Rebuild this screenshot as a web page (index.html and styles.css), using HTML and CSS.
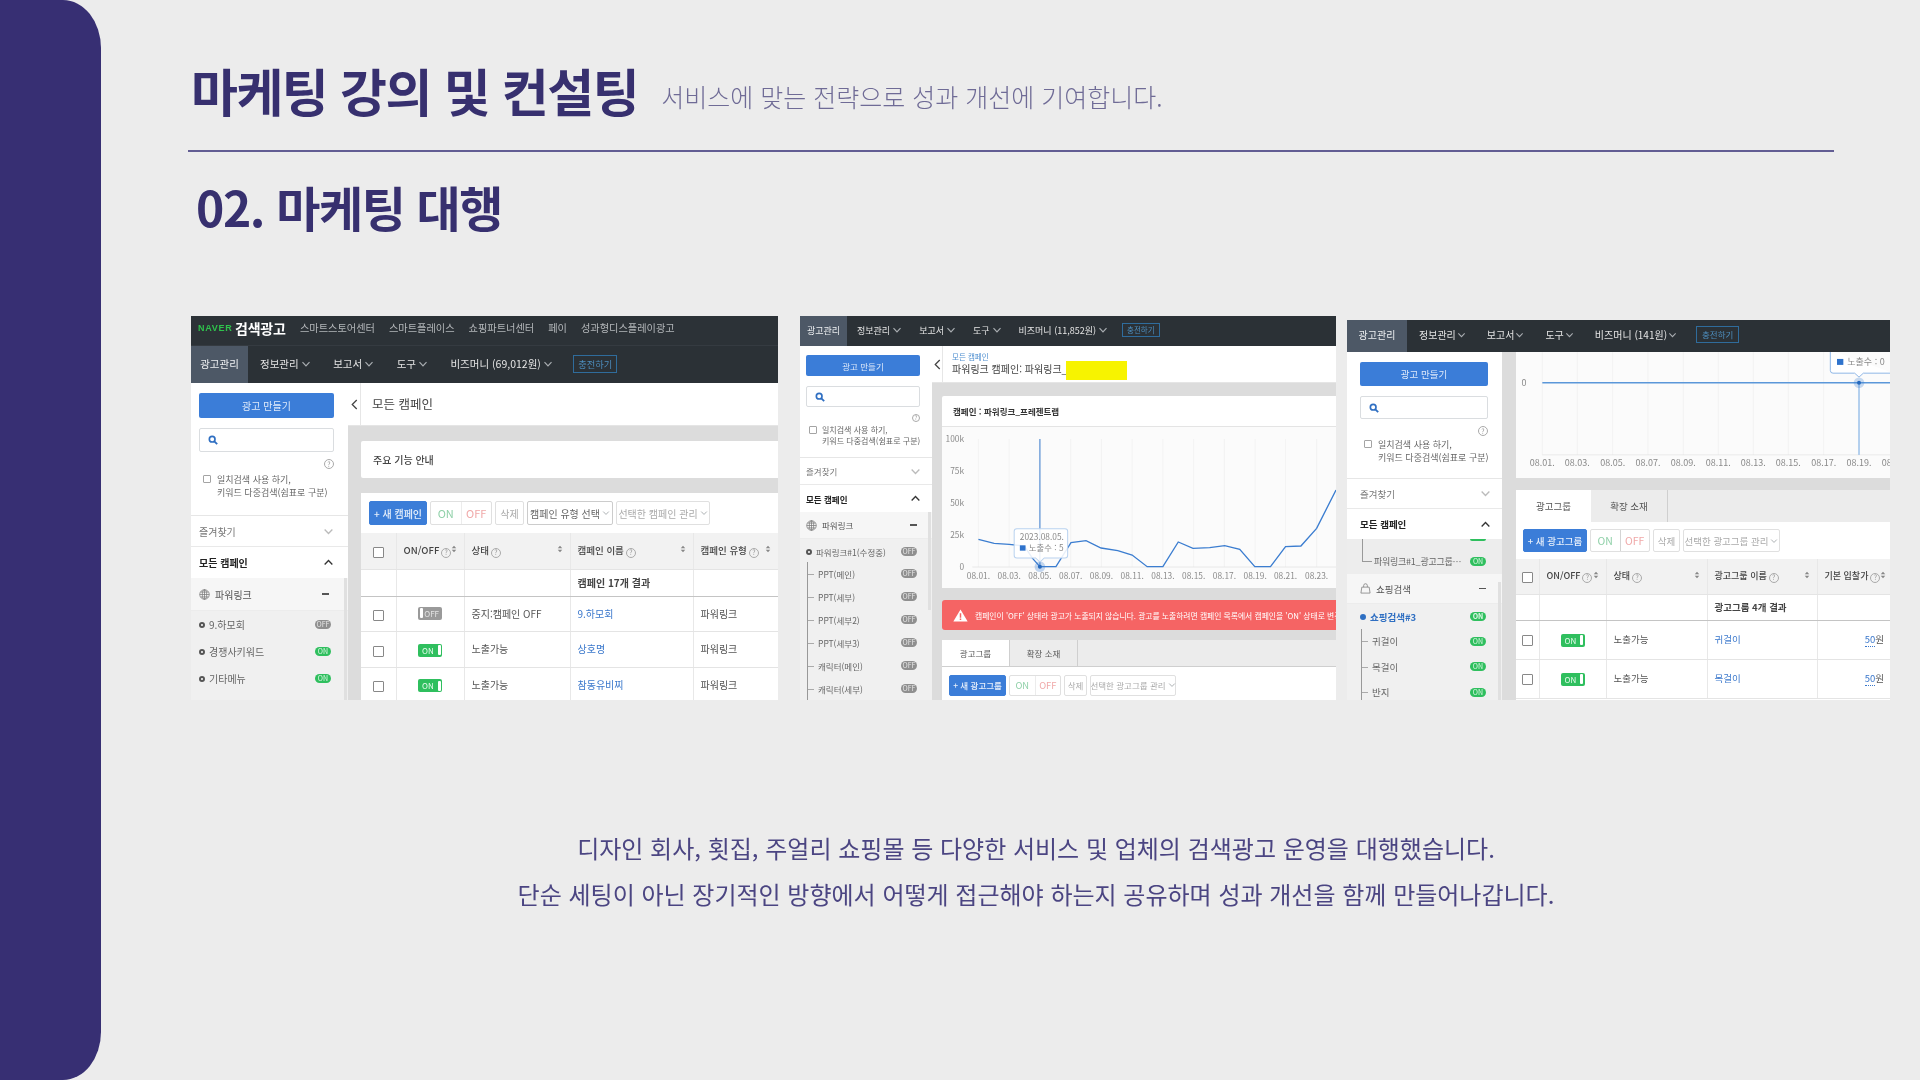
FILE: index.html
```html
<!DOCTYPE html>
<html lang="ko">
<head>
<meta charset="utf-8">
<title>마케팅 강의 및 컨설팅</title>
<link rel="stylesheet" href="styles.css">
</head>
<body>
<svg class="sprite" aria-hidden="true">
  <symbol id="i-search" viewBox="0 0 12 12"><circle cx="5" cy="5" r="3.4" fill="none" stroke="currentColor" stroke-width="2"/><path d="M7.6 7.6 11 11" stroke="currentColor" stroke-width="2.2"/></symbol>
  <symbol id="i-down" viewBox="0 0 10 10"><path d="M1.5 3.2 5 6.8 8.5 3.2" fill="none" stroke="currentColor" stroke-width="1.2"/></symbol>
  <symbol id="i-up" viewBox="0 0 10 10"><path d="M1.5 6.8 5 3.2 8.5 6.8" fill="none" stroke="currentColor" stroke-width="1.2"/></symbol>
  <symbol id="i-left" viewBox="0 0 10 14"><path d="M7.5 2 2.5 7l5 5" fill="none" stroke="currentColor" stroke-width="1.4"/></symbol>
  <symbol id="i-sort" viewBox="0 0 8 10"><path d="M4 .8 7 4H1zM4 9.2 1 6h6z" fill="currentColor"/></symbol>
  <symbol id="i-globe" viewBox="0 0 12 12"><g fill="none" stroke="currentColor" stroke-width=".8"><circle cx="6" cy="6" r="5.2"/><ellipse cx="6" cy="6" rx="2.4" ry="5.2"/><path d="M.8 6h10.400M1.600 3.400h8.800M1.600 8.600h8.800M6 .8v10.400"/></g></symbol>
  <symbol id="i-bag" viewBox="0 0 12 12"><path d="M1 11 2 4.500h8L11 11zM4 4.500V2.800a2 2 0 0 1 4 0v1.700" fill="none" stroke="currentColor" stroke-width=".8"/></symbol>
  <symbol id="i-warn" viewBox="0 0 16 14"><path d="M8 .5 15.700 13.500H.3z" fill="#fff"/><path d="M7.200 4.500h1.600v5H7.200zM7.200 10.300h1.600v1.600H7.200z" fill="#f56464"/></symbol>
</svg>

<div class="page">
  <aside class="rail"></aside>
  <main class="main">
    <header class="head">
      <h1 class="title">마케팅 강의 및 컨설팅</h1>
      <p class="subtitle">서비스에 맞는 전략으로 성과 개선에 기여합니다.</p>
    </header>
    <hr class="rule">
    <h2 class="section">02. 마케팅 대행</h2>

    <section class="shots">
      <!-- 첫 번째 화면 -->
      <article class="shot shot-a">
        <div class="brandbar">
          <span class="naver">NAVER</span><span class="brand">검색광고</span>
          <span class="blink">스마트스토어센터</span><span class="blink">스마트플레이스</span><span class="blink">쇼핑파트너센터</span><span class="blink">페이</span><span class="blink">성과형디스플레이광고</span>
        </div>
        <nav class="nav">
          <span class="nav-on">광고관리</span>
          <span class="nav-i">정보관리<svg class="ic-down"><use href="#i-down"/></svg></span>
          <span class="nav-i">보고서<svg class="ic-down"><use href="#i-down"/></svg></span>
          <span class="nav-i">도구<svg class="ic-down"><use href="#i-down"/></svg></span>
          <span class="nav-i">비즈머니 (69,012원)<svg class="ic-down"><use href="#i-down"/></svg></span>
          <span class="charge">충전하기</span>
        </nav>
        <div class="body">
          <div class="side">
            <div class="side-top">
              <div class="make">광고 만들기</div>
              <div class="search"><svg class="ic-search"><use href="#i-search"/></svg></div>
              <div class="help-row"><span class="help">?</span></div>
              <div class="check-row"><span class="box"></span><span>일치검색 사용 하기,<br>키워드 다중검색(쉼표로 구분)</span></div>
            </div>
            <div class="side-row">즐겨찾기<svg class="ic-chev"><use href="#i-down"/></svg></div>
            <div class="side-row strong">모든 캠페인<svg class="ic-chev dark"><use href="#i-up"/></svg></div>
            <div class="tree">
              <div class="tree-head"><svg class="ic-type"><use href="#i-globe"/></svg><span class="grow">파워링크</span><span class="minus"></span></div>
              <div class="list">
                <div class="item"><span class="dot"></span><span class="grow">9.하모회</span><span class="pill off">OFF</span></div>
                <div class="item"><span class="dot"></span><span class="grow">경쟁사키워드</span><span class="pill">ON</span></div>
                <div class="item"><span class="dot"></span><span class="grow">기타메뉴</span><span class="pill">ON</span></div>
              </div>
              <span class="thumb"></span>
            </div>
          </div>
          <div class="pane">
            <div class="pane-head">
              <span class="back"><svg class="ic-left"><use href="#i-left"/></svg></span>
              <div class="crumb"><strong>모든 캠페인</strong></div>
            </div>
            <div class="pane-body">
              <div class="card notice">주요 기능 안내</div>
              <div class="card grid-card">
                <div class="tools">
                  <span class="btn new">+ 새 캠페인</span>
                  <span class="btn group"><i class="on-t">ON</i><i class="off-t">OFF</i></span>
                  <span class="btn del">삭제</span>
                  <span class="btn sel">캠페인 유형 선택<svg class="ic-down"><use href="#i-down"/></svg></span>
                  <span class="btn mgr">선택한 캠페인 관리<svg class="ic-down"><use href="#i-down"/></svg></span>
                </div>
                <table class="tbl">
                  <colgroup><col class="c1"><col class="c2"><col class="c3"><col class="c4"><col class="c5"></colgroup>
                  <thead><tr>
                    <th><span class="box big"></span></th>
                    <th><div class="th"><span>ON/OFF<span class="help">?</span></span><svg class="ic-sort"><use href="#i-sort"/></svg></div></th>
                    <th><div class="th"><span>상태<span class="help">?</span></span><svg class="ic-sort"><use href="#i-sort"/></svg></div></th>
                    <th><div class="th"><span>캠페인 이름<span class="help">?</span></span><svg class="ic-sort"><use href="#i-sort"/></svg></div></th>
                    <th><div class="th"><span>캠페인 유형<span class="help">?</span></span><svg class="ic-sort"><use href="#i-sort"/></svg></div></th>
                  </tr></thead>
                  <tbody>
                    <tr class="sum"><td></td><td></td><td></td><td><b>캠페인 17개 결과</b></td><td></td></tr>
                    <tr><td><span class="box big"></span></td><td class="mid"><span class="switch off"><i></i>OFF</span></td><td>중지:캠페인 OFF</td><td><a class="lnk">9.하모회</a></td><td>파워링크</td></tr>
                    <tr><td><span class="box big"></span></td><td class="mid"><span class="switch">ON<i></i></span></td><td>노출가능</td><td><a class="lnk">상호명</a></td><td>파워링크</td></tr>
                    <tr><td><span class="box big"></span></td><td class="mid"><span class="switch">ON<i></i></span></td><td>노출가능</td><td><a class="lnk">참동유비찌</a></td><td>파워링크</td></tr>
                  </tbody>
                </table>
              </div>
            </div>
          </div>
        </div>
      </article>

      <!-- 두 번째 화면 -->
      <article class="shot shot-b">
        <nav class="nav">
          <span class="nav-on">광고관리</span>
          <span class="nav-i">정보관리<svg class="ic-down"><use href="#i-down"/></svg></span>
          <span class="nav-i">보고서<svg class="ic-down"><use href="#i-down"/></svg></span>
          <span class="nav-i">도구<svg class="ic-down"><use href="#i-down"/></svg></span>
          <span class="nav-i">비즈머니 (11,852원)<svg class="ic-down"><use href="#i-down"/></svg></span>
          <span class="charge">충전하기</span>
        </nav>
        <div class="body">
          <div class="side">
            <div class="side-top">
              <div class="make">광고 만들기</div>
              <div class="search"><svg class="ic-search"><use href="#i-search"/></svg></div>
              <div class="help-row"><span class="help">?</span></div>
              <div class="check-row"><span class="box"></span><span>일치검색 사용 하기,<br>키워드 다중검색(쉼표로 구분)</span></div>
            </div>
            <div class="side-row">즐겨찾기<svg class="ic-chev"><use href="#i-down"/></svg></div>
            <div class="side-row strong">모든 캠페인<svg class="ic-chev dark"><use href="#i-up"/></svg></div>
            <div class="tree">
              <div class="tree-head"><svg class="ic-type"><use href="#i-globe"/></svg><span class="grow">파워링크</span><span class="minus"></span></div>
              <div class="list">
                <div class="item"><span class="dot"></span><span class="grow">파워링크#1(수정중)</span><span class="pill off">OFF</span></div>
                <div class="sub">
                  <div class="item"><span class="grow">PPT(메인)</span><span class="pill off">OFF</span></div>
                  <div class="item"><span class="grow">PPT(세부)</span><span class="pill off">OFF</span></div>
                  <div class="item"><span class="grow">PPT(세부2)</span><span class="pill off">OFF</span></div>
                  <div class="item"><span class="grow">PPT(세부3)</span><span class="pill off">OFF</span></div>
                  <div class="item"><span class="grow">캐릭터(메인)</span><span class="pill off">OFF</span></div>
                  <div class="item"><span class="grow">캐릭터(세부)</span><span class="pill off">OFF</span></div>
                </div>
              </div>
              <span class="thumb"></span>
            </div>
          </div>
          <div class="pane">
            <div class="pane-head">
              <span class="back"><svg class="ic-left"><use href="#i-left"/></svg></span>
              <div class="crumb"><small>모든 캠페인</small><strong>파워링크 캠페인: 파워링크_<mark class="hide"></mark></strong></div>
            </div>
            <div class="pane-body">
              <div class="card chart-card">
                <div class="chart-title">캠페인 : 파워링크_프레젠트랩</div>
                <svg class="chart" viewBox="39 351 1179 483" preserveAspectRatio="none">
                  <rect x="39" y="351" width="1179" height="483" fill="#fbfbfb"/>
                  <g stroke="#efefef" stroke-width="2">
                    <path d="M148 387V771M240 387V771M332 387V771M424 387V771M516 387V771M608 387V771M700 387V771M792 387V771M884 387V771M976 387V771M1067 387V771M1160 387V771"/>
                  </g>
                  <path d="M130 771H1218" stroke="#dfdfdf" stroke-width="2"/>
                  <g class="axis">
                    <text x="105" y="396" text-anchor="end">100k</text><text x="105" y="492" text-anchor="end">75k</text><text x="105" y="589" text-anchor="end">50k</text><text x="105" y="683" text-anchor="end">25k</text><text x="105" y="780" text-anchor="end">0</text>
                    <g text-anchor="middle">
                      <text x="148" y="806">08.01.</text><text x="240" y="806">08.03.</text><text x="332" y="806">08.05.</text><text x="424" y="806">08.07.</text><text x="516" y="806">08.09.</text><text x="608" y="806">08.11.</text><text x="700" y="806">08.13.</text><text x="792" y="806">08.15.</text><text x="884" y="806">08.17.</text><text x="976" y="806">08.19.</text><text x="1067" y="806">08.21.</text><text x="1160" y="806">08.23.</text>
                    </g>
                  </g>
                  <path d="M148 688 195 700 240 703 285 708 310 745 332 770 380 770 425 698 470 692 515 714 565 722 608 735 653 770 700 770 746 696 790 715 840 713 885 707 930 718 975 770 1022 770 1067 710 1113 708 1160 655 1218 540" fill="none" stroke="#3b7dd0" stroke-width="4"/>
                  <path d="M332 387V770" stroke="#3b7dd0" stroke-width="3"/>
                  <circle cx="332" cy="770" r="16" fill="#3b7dd0" opacity=".3"/><circle cx="332" cy="770" r="6" fill="#2468bd"/>
                  <path d="M263 656H407a8 8 0 0 1 8 8V736a8 8 0 0 1-8 8H345L332 756 319 744H263a8 8 0 0 1-8-8V664a8 8 0 0 1 8-8z" fill="#fff" fill-opacity=".88" stroke="#b9d2ef" stroke-width="3"/>
                  <g class="axis"><text x="272" y="690">2023.08.05.</text><text x="299" y="722">노출수 : 5</text></g>
                  <rect x="272" y="706" width="17" height="16" fill="#2f73cc"/>
                </svg>
              </div>
              <div class="alert"><svg class="ic-warn"><use href="#i-warn"/></svg>캠페인이 'OFF' 상태라 광고가 노출되지 않습니다. 광고를 노출하려면 캠페인 목록에서 캠페인을 'ON' 상태로 변경하세요.</div>
              <div class="tabs"><span class="tab on">광고그룹</span><span class="tab">확장 소재</span></div>
              <div class="card grid-card">
                <div class="tools">
                  <span class="btn new">+ 새 광고그룹</span>
                  <span class="btn group"><i class="on-t">ON</i><i class="off-t">OFF</i></span>
                  <span class="btn del">삭제</span>
                  <span class="btn mgr">선택한 광고그룹 관리<svg class="ic-down"><use href="#i-down"/></svg></span>
                </div>
              </div>
            </div>
          </div>
        </div>
      </article>

      <!-- 세 번째 화면 -->
      <article class="shot shot-c">
        <nav class="nav">
          <span class="nav-on">광고관리</span>
          <span class="nav-i">정보관리<svg class="ic-down"><use href="#i-down"/></svg></span>
          <span class="nav-i">보고서<svg class="ic-down"><use href="#i-down"/></svg></span>
          <span class="nav-i">도구<svg class="ic-down"><use href="#i-down"/></svg></span>
          <span class="nav-i">비즈머니 (141원)<svg class="ic-down"><use href="#i-down"/></svg></span>
          <span class="charge">충전하기</span>
        </nav>
        <div class="body">
          <div class="side">
            <div class="side-top">
              <div class="make">광고 만들기</div>
              <div class="search"><svg class="ic-search"><use href="#i-search"/></svg></div>
              <div class="help-row"><span class="help">?</span></div>
              <div class="check-row"><span class="box"></span><span>일치검색 사용 하기,<br>키워드 다중검색(쉼표로 구분)</span></div>
            </div>
            <div class="side-row">즐겨찾기<svg class="ic-chev"><use href="#i-down"/></svg></div>
            <div class="side-row strong">모든 캠페인<svg class="ic-chev dark"><use href="#i-up"/></svg></div>
            <div class="tree">
              <div class="tree-prev"><span class="grow">파워링크#1_광고그룹⋯</span><span class="pill">ON</span></div>
              <div class="tree-head"><svg class="ic-type"><use href="#i-bag"/></svg><span class="grow">쇼핑검색</span><span class="minus"></span></div>
              <div class="list">
                <div class="item active"><span class="dot"></span><span class="grow">쇼핑검색#3</span><span class="pill">ON</span></div>
                <div class="sub">
                  <div class="item"><span class="grow">귀걸이</span><span class="pill">ON</span></div>
                  <div class="item"><span class="grow">목걸이</span><span class="pill">ON</span></div>
                  <div class="item"><span class="grow">반지</span><span class="pill">ON</span></div>
                </div>
              </div>
              <span class="thumb"></span>
            </div>
          </div>
          <div class="pane">
            <div class="pane-body">
              <div class="card chart-card">
                <svg class="chart" viewBox="48 126 1122 381" preserveAspectRatio="none">
                  <rect x="48" y="126" width="1122" height="381" fill="#fbfbfb"/>
                  <path d="M127 126V437M232 126V437M338 126V437M444 126V437M550 126V437M655 126V437M760 126V437M865 126V437M971 126V437" stroke="#efefef" stroke-width="2"/>
                  <path d="M127 437H1170" stroke="#e2e2e2" stroke-width="2"/>
                  <g class="axis"><text x="72" y="229" text-anchor="middle">0</text>
                    <g text-anchor="middle"><text x="127" y="472">08.01.</text><text x="232" y="472">08.03.</text><text x="338" y="472">08.05.</text><text x="444" y="472">08.07.</text><text x="550" y="472">08.09.</text><text x="655" y="472">08.11.</text><text x="760" y="472">08.13.</text><text x="865" y="472">08.15.</text><text x="971" y="472">08.17.</text><text x="1077" y="472">08.19.</text><text x="1183" y="472">08.21.</text></g>
                  </g>
                  <path d="M127 219H1170" stroke="#5b97d9" stroke-width="5"/>
                  <path d="M1077 219V437" stroke="#6ba3e0" stroke-width="3"/>
                  <circle cx="1077" cy="219" r="16" fill="#3b7dd0" opacity=".28"/><circle cx="1077" cy="219" r="6" fill="#2468bd"/>
                  <path d="M991 120V182a8 8 0 0 0 8 8H1064L1077 202 1090 190H1180" fill="#fff" stroke="#8fb6e6" stroke-width="3"/>
                  <rect x="1011" y="147" width="19" height="18" fill="#2f73cc"/>
                  <g class="axis"><text x="1042" y="166">노출수 : 0</text></g>
                </svg>
              </div>
              <div class="tabs"><span class="tab on">광고그룹</span><span class="tab">확장 소재</span></div>
              <div class="card grid-card">
                <div class="tools">
                  <span class="btn new">+ 새 광고그룹</span>
                  <span class="btn group"><i class="on-t">ON</i><i class="off-t">OFF</i></span>
                  <span class="btn del">삭제</span>
                  <span class="btn mgr">선택한 광고그룹 관리<svg class="ic-down"><use href="#i-down"/></svg></span>
                </div>
                <table class="tbl">
                  <colgroup><col class="c1"><col class="c2"><col class="c3"><col class="c4"><col class="c5"></colgroup>
                  <thead><tr>
                    <th><span class="box big"></span></th>
                    <th><div class="th"><span>ON/OFF<span class="help">?</span></span><svg class="ic-sort"><use href="#i-sort"/></svg></div></th>
                    <th><div class="th"><span>상태<span class="help">?</span></span><svg class="ic-sort"><use href="#i-sort"/></svg></div></th>
                    <th><div class="th"><span>광고그룹 이름<span class="help">?</span></span><svg class="ic-sort"><use href="#i-sort"/></svg></div></th>
                    <th><div class="th"><span>기본 입찰가<span class="help">?</span></span><svg class="ic-sort"><use href="#i-sort"/></svg></div></th>
                  </tr></thead>
                  <tbody>
                    <tr class="sum"><td></td><td></td><td></td><td><b>광고그룹 4개 결과</b></td><td></td></tr>
                    <tr><td><span class="box big"></span></td><td class="mid"><span class="switch">ON<i></i></span></td><td>노출가능</td><td><a class="lnk">귀걸이</a></td><td class="num"><a class="bid">50</a>원</td></tr>
                    <tr><td><span class="box big"></span></td><td class="mid"><span class="switch">ON<i></i></span></td><td>노출가능</td><td><a class="lnk">목걸이</a></td><td class="num"><a class="bid">50</a>원</td></tr>
                  </tbody>
                </table>
              </div>
            </div>
          </div>
        </div>
      </article>
    </section>

    <section class="desc">
      <p>디자인 회사, 횟집, 주얼리 쇼핑몰 등 다양한 서비스 및 업체의 검색광고 운영을 대행했습니다.</p>
      <p>단순 세팅이 아닌 장기적인 방향에서 어떻게 접근해야 하는지 공유하며 성과 개선을 함께 만들어나갑니다.</p>
    </section>
  </main>
</div>
</body>
</html>
```

FILE: styles.css
```css
* { box-sizing: border-box; }
html, body { margin: 0; height: 100%; }
body {
  font-family: "Noto Sans CJK KR", "Noto Sans", sans-serif;
  background: #ececec;
  overflow: hidden;
}
.sprite { display: none; }
.page { display: flex; width: 1920px; height: 1080px; }
.rail {
  flex: 0 0 101px;
  background: #372f73;
  border-radius: 0 38px 38px 0 / 0 48px 48px 0;
}
.main { flex: 1; padding: 0 30px 0 87px; display: flex; flex-direction: column; min-width: 0; }

/* 제목 영역 */
.head { height: 150px; padding: 54px 0 0 3px; display: flex; align-items: flex-start; column-gap: 23px; }
.title { margin: 0; font-size: 51px; line-height: 72px; font-weight: 700; color: #37306f; letter-spacing: -1.5px; filter: blur(.3px); }
.subtitle { margin: 6px 0 0; font-size: 25px; line-height: 72px; font-weight: 300; color: #6f6b96; filter: blur(.3px); }
.rule { margin: 0 56px 0 0; border: 0; height: 2px; background: #625d93; }
.section { margin: 21px 0 0 8px; font-size: 48px; line-height: 66px; font-weight: 700; letter-spacing: -1.4px; color: #37306f; filter: blur(.3px); }

/* 스크린샷 묶음 */
.shots { display: flex; align-items: flex-end; height: 384px; margin: 77px 0 0 3px; }
.shot {
  --fs: 10px; --nav-fs: 10.500px; --side-w: 157px; --side-pad: 8px; --strip: 13px; --chev-r: 14px; --head-r: 16px; --list-r: 17px;
  --btn-h: 25px; --search-h: 24px; --top-h: 133px; --row-h: 31px; --hdr-h: 33px; --item-h: 27px;
  display: flex; flex-direction: column; overflow: hidden; flex: none;
  background: #fff; color: #444; font-size: var(--fs); filter: blur(.35px);
}
.shot-a { width: 587px; height: 384px; margin-right: 22px; }
.shot-b {
  width: 536px; height: 384px; margin-right: 11px;
  --fs: 8.500px; --nav-fs: 9px; --side-w: 132px; --side-pad: 6px; --strip: 11px; --chev-r: 11px; --head-r: 12px; --list-r: 15px;
  --btn-h: 21px; --search-h: 21px; --top-h: 112px; --row-h: 27px; --hdr-h: 27px; --item-h: 23px;
}
.shot-c {
  width: 543px; height: 380px;
  --fs: 9.500px; --nav-fs: 10px; --side-w: 155px; --side-pad: 13px; --strip: 14px; --chev-r: 11px; --head-r: 13px; --list-r: 16px;
  --btn-h: 24px; --search-h: 23px; --top-h: 127px; --row-h: 30px; --hdr-h: 30px; --item-h: 25.500px;
}

.brandbar { height: 30px; flex: none; background: #2c3237; display: flex; align-items: center; padding: 0 0 6px 7px; border-bottom: 1px solid #353b41; }
.naver { color: #2fc24c; font-weight: 700; font-size: 9px; letter-spacing: .7px; width: 37px; font-family: "Liberation Sans", sans-serif; }
.brand { color: #fff; font-size: 14px; font-weight: 700; width: 65px; letter-spacing: -.2px; }
.blink { color: #b4b7ba; font-size: 10.200px; margin-right: 14px; }

.nav { flex: none; display: flex; align-items: center; height: 37px; padding-bottom: 2px; background: #2b3136; color: #e4e4e4; font-size: var(--nav-fs); }
.shot-b .nav { height: 30px; }
.shot-c .nav { height: 32px; padding-bottom: 3px; }
.nav-on { align-self: stretch; margin-bottom: -3px; padding-bottom: 3px; display: flex; align-items: center; justify-content: center; width: 57px; background: #4d5866; margin-right: 12px; color: #eef0f2; }
.nav-i { display: flex; align-items: center; margin-right: 22.500px; white-space: nowrap; }
.ic-down { width: 10px; height: 10px; margin-left: 2px; color: #a9adb1; flex: none; }
.charge { border: 1px solid #2f6c9c; color: #4d8dbd; padding: 0 4px; height: 18px; line-height: 16px; font-size: .88em; margin-left: -2px; white-space: nowrap; }
.shot-b .nav-on { width: 47px; margin-right: 10px; }
.shot-b .nav-i { margin-right: 17px; }
.shot-b .charge { height: 14px; line-height: 12px; padding: 0 4px; font-size: 7.500px; margin-left: -3px; }
.shot-c .nav-on { width: 60px; margin-right: 12px; }
.shot-c .nav-i { margin-right: 21px; }
.shot-c .nav-i .ic-down { margin-left: 1px; width: 9px; }
.shot-c .charge { height: 17px; line-height: 15px; padding: 0 5px; font-size: 8.500px; margin-left: -2px; }

.body { flex: 1; min-height: 0; display: flex; }

/* 왼쪽 메뉴 */
.side { flex: 0 0 var(--side-w); display: flex; flex-direction: column; background: #fff; color: #555; overflow: hidden; }
.side-top { flex: none; height: var(--top-h); padding: 10px 14px 0 var(--side-pad); border-bottom: 1px solid #e6e6e6; }
.shot-b .side-top { padding: 9px 12px 0 6px; }
.make { height: var(--btn-h); background: #3b7dd8; color: #dfeafa; border-radius: 2px; display: flex; align-items: center; justify-content: center; }
.search { height: var(--search-h); margin-top: 10px; border: 1px solid #dadde0; border-radius: 2px; display: flex; align-items: center; padding-left: 8px; }
.ic-search { width: 10px; height: 10px; color: #2f6fc2; }
.help-row { display: flex; justify-content: flex-end; height: 14px; margin-top: 7px; }
.help { display: inline-flex; align-items: center; justify-content: center; width: 10px; height: 10px; border: 1px solid #aaa; border-radius: 50%; font-size: 7px; color: #999; margin-left: 2px; line-height: 1; vertical-align: -1px; font-weight: 400; }
.shot-b .help { width: 8px; height: 8px; font-size: 6px; }
.check-row { display: flex; gap: 6px; padding-left: 4px; line-height: 13px; color: #666; font-size: .9em; white-space: nowrap; }
.shot-b .check-row { line-height: 11px; margin-top: -4px; font-size: 8px; padding-left: 3px; gap: 5px; }
.shot-c .check-row { margin-top: -2px; font-size: 9px; }
.box { flex: none; display: inline-block; width: 8px; height: 8px; border: 1px solid #a4a4a4; border-radius: 1px; background: #fff; margin-top: 2px; }
.box.big { width: 11px; height: 11px; border-color: #888; margin: 0; vertical-align: middle; }
.side-row { flex: none; height: var(--row-h); padding: 0 var(--chev-r) 0 var(--side-pad); display: flex; align-items: center; justify-content: space-between; color: #777; border-bottom: 1px solid #e9e9e9; }
.side-row.strong { color: #222; font-weight: 700; border: 0; }
.ic-chev { width: 11px; height: 11px; color: #bbb; }
.ic-chev.dark { color: #333; }
.tree { position: relative; flex: 1; background: #f0f0f0; min-height: 0; }
.tree-head { height: var(--hdr-h); display: flex; align-items: center; gap: 5px; padding: 0 var(--head-r) 0 var(--side-pad); background: #f6f6f6; color: #555; border-bottom: 1px solid #ececec; }
.ic-type { width: 11px; height: 11px; color: #777; flex: none; }
.grow { flex: 1; white-space: nowrap; min-width: 0; }
.minus { width: 7px; height: 1.500px; background: #555; margin-right: 3px; }
.list { padding: 0 var(--list-r) 0 var(--side-pad); }
.shot-b .list { padding-top: 1px; }
.item { height: var(--item-h); display: flex; align-items: center; gap: 4px; color: #666; }
.item.active { color: #2f6fc2; font-weight: 700; }
.dot { flex: none; width: 6px; height: 6px; border-radius: 50%; background: #fff; border: 2px solid #555; }
.active .dot { background: #2f6fc2; border-color: #2f6fc2; }
.pill { flex: none; width: 16px; height: 9px; border-radius: 5px; background: #2fbf5e; color: #dff7e6; font-size: 7px; line-height: 9px; text-align: center; }
.pill.off { background: #8f8f8f; color: #e6e6e6; }
.sub { border-left: 1px solid #999; margin-left: 1px; margin-top: -1px; }
.sub .item { padding-left: 10px; position: relative; }
.sub .item::before { content: ""; position: absolute; left: 0; top: 50%; width: 6px; height: 1px; background: #aaa; }
.thumb { position: absolute; right: 1px; top: 0; bottom: 0; width: 3px; background: #e0e0e0; }
.shot-b .thumb { bottom: 90px; }
.shot-c .thumb { top: 43px; }
.tree-prev { height: 35px; display: flex; align-items: center; padding: 10px 16px 0 27px; background: #ededed; color: #666; position: relative; font-size: 9px; letter-spacing: -.25px; }
.tree-prev::before { content: ""; position: absolute; left: 15px; top: 0; width: 9px; height: 22px; border: solid #999; border-width: 0 0 1px 1px; }
.tree-prev::after { content: ""; position: absolute; right: 16px; top: 0; width: 16px; height: 2px; background: #2fbf5e; border-radius: 0 0 5px 5px; }

/* 오른쪽 내용 */
.pane { flex: 1; min-width: 0; display: flex; flex-direction: column; background: #dcdcdc; }
.pane-head { flex: none; height: 43px; display: flex; background: #fff; border-bottom: 1px solid #e5e5e5; }
.shot-b .pane-head { height: 37px; }
.back { flex: 0 0 var(--strip); display: flex; align-items: center; justify-content: center; border-right: 1px solid #e6e6e6; background: #fff; }
.ic-left { width: 9px; height: 13px; color: #444; }
.crumb { padding-left: 11px; display: flex; flex-direction: column; justify-content: center; }
.crumb strong { font-weight: 400; font-size: 12.500px; color: #444; line-height: 16px; white-space: nowrap; }
.crumb small { font-size: 7.500px; color: #4f8fd0; line-height: 9px; }
.shot-b .crumb { padding-left: 9px; }
.shot-b .crumb strong { font-size: 10px; line-height: 14px; display: flex; margin-top: 1.500px; }
.hide { display: inline-block; width: 61px; height: 19px; background: #f7f300; margin: -1px 0 -4px -1px; }
.pane-body { flex: 1; min-height: 0; padding: 15px 0 0 var(--strip); display: flex; flex-direction: column; gap: 15px; }
.shot-b .pane-body { padding-top: 13px; gap: 12px; padding-left: 10px; }
.shot-c .pane-body { padding-top: 0; gap: 12px; }
.card { background: #fff; flex: none; }
.notice { height: 37px; display: flex; align-items: center; padding: 0 0 1px 12px; font-weight: 500; color: #444; border-radius: 2px 0 0 2px; }
.grid-card { flex: 1; min-height: 0; }

.chart-card { height: 192px; border-radius: 2px 0 0 0; }
.chart-title { height: 31px; display: flex; align-items: center; padding-left: 11px; font-weight: 700; color: #333; border-bottom: 1px solid #e4e4e4; }
.chart { display: block; width: 100%; height: 161px; }
.axis { font-size: 25px; fill: #8a8a8a; }
.shot-c .chart-card { height: 126px; }
.shot-c .chart { height: 126px; }
.shot-c .axis { font-size: 27px; }

.alert { flex: none; height: 30px; margin-top: 0; background: #f56464; color: #fff; display: flex; align-items: center; gap: 7px; padding-left: 11px; border-radius: 3px 0 0 3px; font-size: 7.800px; white-space: nowrap; overflow: hidden; }
.ic-warn { width: 15px; height: 13px; flex: none; }

.tabs { flex: none; display: flex; height: 27px; background: #ececec; border-bottom: 1px solid #cfcfcf; margin-top: -2px; }
.shot-c .tabs { height: 32px; margin-top: 0; border: 0; }
.tab { width: 68px; display: flex; align-items: center; justify-content: center; color: #555; border-right: 1px solid #cfcfcf; }
.tab.on { background: #fff; }
.shot-b .grid-card { margin-top: -12px; }
.shot-c .tab.on { width: 75px; border: 0; }
.shot-c .tab { width: 77px; }
.shot-c .grid-card { margin-top: -12px; }

.tools { display: flex; gap: 3px; align-items: center; padding: 8px 0 8px 8px; height: 40px; }
.shot-b .tools { height: 36px; padding: 7px 0 7px 7px; }
.shot-c .tools { height: 37px; padding: 7px 0 7px 7px; }
.btn { flex: none; height: 24px; display: flex; align-items: center; justify-content: center; border: 1px solid #e0e0e0; border-radius: 2px; color: #aaa; white-space: nowrap; }
.btn .ic-down { width: 8px; height: 8px; }
.shot-b .btn { height: 21px; }
.shot-c .btn { height: 23px; }
.new { width: 58px; background: #3b7dd8; border-color: #3b7dd8; color: #e8f0fb; font-weight: 500; }
.group { width: 62px; align-items: stretch; }
.group i { flex: 1; font-style: normal; font-size: 1.100em; display: flex; align-items: center; justify-content: center; }
.on-t { color: #8fd0a8; border-right: 1px solid #ececec; }
.shot-c .on-t { border-right-color: #d4d4d4; }
.off-t { color: #f0a8a8; }
.del { width: 29px; }
.sel { width: 86px; color: #666; border-color: #ccc; }
.mgr { width: 94px; }
.shot-b .new { width: 57px; }
.shot-b .group { width: 52px; }
.shot-b .del { width: 23px; }
.shot-b .mgr { width: 86px; }
.shot-c .new { width: 64px; }
.shot-c .group { width: 60px; }
.shot-c .del { width: 27px; }
.shot-c .mgr { width: 97px; }

.tbl { width: 100%; table-layout: fixed; border-collapse: collapse; color: #555; }
.tbl td, .tbl th { border-left: 1px solid #e8e8e8; border-bottom: 1px solid #e4e4e4; padding: 0 0 1px 7px; white-space: nowrap; overflow: hidden; text-align: left; font-weight: 400; }
.tbl td:first-child, .tbl th:first-child { border-left: 0; padding: 0; text-align: center; }
.tbl th { height: 36px; background: #f2f2f2; color: #444; font-size: 9.500px; font-weight: 500; }
.tbl tbody tr { height: 35.500px; }
.tbl tbody .sum { height: 27px; }
.tbl .sum td { border-bottom-color: #c4c4c4; }
.tbl b { color: #444; font-weight: 700; }
.th { display: flex; justify-content: space-between; align-items: center; padding-right: 7px; }
.ic-sort { width: 6px; height: 8px; color: #888; flex: none; margin-top: -2px; }
.tbl .mid { text-align: center; padding: 0; }
.lnk { color: #3b78cc; }
.c1 { width: 35px; } .c2 { width: 68px; } .c3 { width: 106px; } .c4 { width: 123px; }
.shot-c .c1 { width: 23px; } .shot-c .c2 { width: 67px; } .shot-c .c3 { width: 101px; } .shot-c .c4 { width: 110px; }
.shot-c .tbl th { height: 35px; font-size: 9px; }
.shot-c .tbl tbody .sum { height: 26px; }
.shot-c .tbl tbody tr:not(.sum) { height: 39px; }
.switch { display: inline-flex; align-items: center; justify-content: space-between; width: 24px; height: 13px; padding: 0 1.500px 0 4px; border-radius: 2px; background: #2fbf5e; color: #e8fbee; font-size: 8px; }
.switch i { width: 3px; height: 10px; background: #fff; border-radius: 1px; }
.switch.off { background: #9a9a9a; color: #e4e4e4; padding: 0 3px 0 1.500px; }
.num { text-align: right !important; padding-right: 6px !important; }
.bid { color: #3b78cc; border-bottom: 1px dotted #3b78cc; }

/* 설명 */
.desc { margin: 0 6px 0 0; padding-top: 125px; text-align: center; color: #4b4582; font-size: 24px; line-height: 46px; filter: blur(.25px); }
.desc p { margin: 0; }
```
